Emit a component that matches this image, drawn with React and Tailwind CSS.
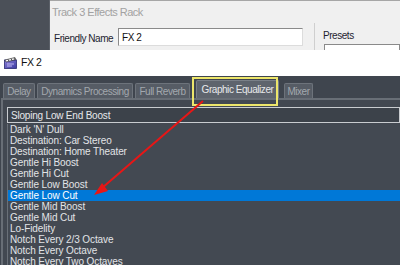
import React from "react";

const items = [
  "Dark 'N' Dull",
  "Destination: Car Stereo",
  "Destination: Home Theater",
  "Gentle Hi Boost",
  "Gentle Hi Cut",
  "Gentle Low Boost",
  "Gentle Low Cut",
  "Gentle Mid Boost",
  "Gentle Mid Cut",
  "Lo-Fidelity",
  "Notch Every 2/3 Octave",
  "Notch Every Octave",
  "Notch Every Two Octaves",
];

function FxIcon() {
  return (
    <svg width="13" height="12" viewBox="0 0 13 12">
      <defs>
        <linearGradient id="g1" x1="0" y1="0" x2="1" y2="1">
          <stop offset="0" stopColor="#8c7fd8" />
          <stop offset="1" stopColor="#3a3aa0" />
        </linearGradient>
      </defs>
      <rect x="0.5" y="3" width="12" height="8.5" fill="url(#g1)" stroke="#2a2a70" strokeWidth="0.8" />
      <path d="M1 3 L11 0.5 L12 2.5 L2 5 Z" fill="#ffffff" stroke="#222" strokeWidth="0.6" />
      <path d="M4 2.3 L5 4.2 M7 1.6 L8 3.5 M10 0.9 L11 2.8" stroke="#222" strokeWidth="0.8" />
      <path d="M3 7 L10 7 M3 9 L8 9" stroke="#d8d0ff" strokeWidth="0.8" />
    </svg>
  );
}

function Tab({ label, w, active }) {
  return (
    <div
      className={
        active
          ? "h-[18px] flex items-center justify-center rounded-t-[2px] border border-b-0 border-[#7a8088] bg-[#5e646d] text-[#e8e9eb]"
          : "h-[15px] flex items-center justify-center rounded-t-[2px] border border-b-0 border-[#6d737b] bg-[#565c65] text-[#a3a8ae]"
      }
      style={{ width: w }}
    >
      {label}
    </div>
  );
}

export default function App() {
  return (
    <div
      className="relative w-[400px] h-[265px] overflow-hidden flex flex-col bg-[#3f454e] text-[10px] tracking-[-0.45px]"
      style={{ fontFamily: '"Liberation Sans", Arial, sans-serif' }}
    >
      {/* top background window */}
      <div className="h-[50px] flex shrink-0">
        <div className="w-[50px] bg-[#4b5058] border-r border-[#5c6169]" />
        <div className="flex-1 bg-[#f0f0f0] border-t border-[#a6a6a6] flex flex-col">
          <div className="h-[22px] pl-[2px] flex items-center text-[11px] text-[#a2a2a2] tracking-[-0.5px]">
            Track 3 Effects Rack
          </div>
          <div className="flex-1 flex">
            <div className="w-[264px] flex items-start pt-[5px] pl-[4px]">
              <span className="mt-[3px] w-[64px] text-[#1e1e30]">Friendly Name</span>
              <div className="w-[185px] h-[18px] border border-[#8a8a8a] border-r-[#dcdcdc] border-b-[#dcdcdc] bg-white flex items-center pl-[3px] text-[10px] text-[#111]">
                FX 2
              </div>
            </div>
            <div className="w-px bg-[#cfcfcf]" />
            <div className="flex-1 pl-[8px] pt-[7px] flex flex-col">
              <span className="text-[#1e1e30] leading-[12px]">Presets</span>
              <div className="mt-[2px] ml-[1px] flex-1 border border-b-0 border-[#8a8a8a] bg-white" />
            </div>
          </div>
        </div>
      </div>

      {/* FX 2 title bar */}
      <div className="h-[26px] bg-white flex items-center pl-[4px] gap-[4px] shrink-0 text-[10.5px] text-[#111]">
        <FxIcon />
        <span>FX 2</span>
      </div>

      {/* dark content */}
      <div className="flex-1 flex flex-col">
        <div className="h-[22px] flex items-end pl-[3px] gap-[2px]">
          <Tab label="Delay" w={32} />
          <Tab label="Dynamics Processing" w={96} />
          <Tab label="Full Reverb" w={55} />
          <div className="w-[2px]" />
          <Tab label="Graphic Equalizer" w={83} active />
          <div className="w-[1px]" />
          <Tab label="Mixer" w={29} />
        </div>
        <div className="flex-1 ml-[1px] border-l-2 border-t-2 border-[#686e76] bg-[#424851] pl-[4px] pt-[7px] flex flex-col">
          <div className="h-[16px] border border-[#c9ccd0] bg-[#3c424a] flex items-center pl-[3px] text-[#e6e8ea] tracking-[-0.2px]">
            Sloping Low End Boost
          </div>
          <div className="mt-[1px] flex-1 border-l border-[#6a7078] bg-[#434952] flex flex-col tracking-[-0.1px]">
            {items.map((t) => (
              <div
                key={t}
                className={
                  t === "Gentle Low Cut"
                    ? "h-[11px] shrink-0 leading-[11px] pl-[2px] bg-[#0078d7] text-white"
                    : "h-[11px] shrink-0 leading-[11px] pl-[2px] text-[#e2e4e7]"
                }
              >
                {t}
              </div>
            ))}
          </div>
        </div>
      </div>

      {/* yellow highlight box */}
      <div className="absolute left-[192px] top-[77px] w-[86px] h-[29px] border-2 border-[#ede66b]" />

      {/* red arrow */}
      <svg className="absolute left-0 top-0" width="400" height="265" viewBox="0 0 400 265">
        <line x1="203" y1="101" x2="102" y2="188" stroke="#e81616" strokeWidth="2" />
        <polygon points="94,195 102,183 108,191" fill="#e81616" />
      </svg>
    </div>
  );
}
